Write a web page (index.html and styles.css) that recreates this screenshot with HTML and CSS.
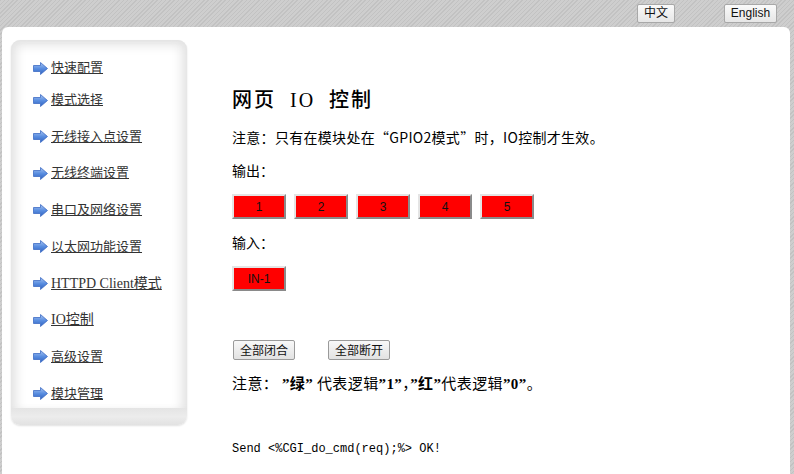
FILE: index.html
```html
<!DOCTYPE html>
<html lang="zh">
<head>
<meta charset="utf-8">
<title>网页 IO 控制</title>
<link rel="stylesheet" href="styles.css">
</head>
<body>
<div class="topbar">
  <button class="lang lang-zh">中文</button>
  <button class="lang lang-en">English</button>
</div>
<div class="page">
  <aside class="sidebar">
    <ul class="menu">
      <li class="first"><span class="arrow"><svg width="15" height="13" viewBox="0 0 15 13"><defs><linearGradient id="ag" x1="0" y1="0" x2="0" y2="1"><stop offset="0" stop-color="#a6c4f2"/><stop offset="0.5" stop-color="#5a8ee0"/><stop offset="1" stop-color="#2f62c0"/></linearGradient></defs><path d="M0.5 3.5 H7.5 V0.5 L14.5 6.5 L7.5 12.5 V9.5 H0.5 Z" fill="url(#ag)" stroke="#3d6cc4" stroke-width="0.8"/></svg></span><a href="#">快速配置</a></li>
      <li class="second"><span class="arrow"><svg width="15" height="13" viewBox="0 0 15 13"><path d="M0.5 3.5 H7.5 V0.5 L14.5 6.5 L7.5 12.5 V9.5 H0.5 Z" fill="url(#ag)" stroke="#3d6cc4" stroke-width="0.8"/></svg></span><a href="#">模式选择</a></li>
      <li><span class="arrow"><svg width="15" height="13" viewBox="0 0 15 13"><path d="M0.5 3.5 H7.5 V0.5 L14.5 6.5 L7.5 12.5 V9.5 H0.5 Z" fill="url(#ag)" stroke="#3d6cc4" stroke-width="0.8"/></svg></span><a href="#">无线接入点设置</a></li>
      <li><span class="arrow"><svg width="15" height="13" viewBox="0 0 15 13"><path d="M0.5 3.5 H7.5 V0.5 L14.5 6.5 L7.5 12.5 V9.5 H0.5 Z" fill="url(#ag)" stroke="#3d6cc4" stroke-width="0.8"/></svg></span><a href="#">无线终端设置</a></li>
      <li><span class="arrow"><svg width="15" height="13" viewBox="0 0 15 13"><path d="M0.5 3.5 H7.5 V0.5 L14.5 6.5 L7.5 12.5 V9.5 H0.5 Z" fill="url(#ag)" stroke="#3d6cc4" stroke-width="0.8"/></svg></span><a href="#">串口及网络设置</a></li>
      <li><span class="arrow"><svg width="15" height="13" viewBox="0 0 15 13"><path d="M0.5 3.5 H7.5 V0.5 L14.5 6.5 L7.5 12.5 V9.5 H0.5 Z" fill="url(#ag)" stroke="#3d6cc4" stroke-width="0.8"/></svg></span><a href="#">以太网功能设置</a></li>
      <li><span class="arrow"><svg width="15" height="13" viewBox="0 0 15 13"><path d="M0.5 3.5 H7.5 V0.5 L14.5 6.5 L7.5 12.5 V9.5 H0.5 Z" fill="url(#ag)" stroke="#3d6cc4" stroke-width="0.8"/></svg></span><a href="#" class="latin">HTTPD Client模式</a></li>
      <li><span class="arrow"><svg width="15" height="13" viewBox="0 0 15 13"><path d="M0.5 3.5 H7.5 V0.5 L14.5 6.5 L7.5 12.5 V9.5 H0.5 Z" fill="url(#ag)" stroke="#3d6cc4" stroke-width="0.8"/></svg></span><a href="#" class="latin">IO控制</a></li>
      <li><span class="arrow"><svg width="15" height="13" viewBox="0 0 15 13"><path d="M0.5 3.5 H7.5 V0.5 L14.5 6.5 L7.5 12.5 V9.5 H0.5 Z" fill="url(#ag)" stroke="#3d6cc4" stroke-width="0.8"/></svg></span><a href="#">高级设置</a></li>
      <li><span class="arrow"><svg width="15" height="13" viewBox="0 0 15 13"><path d="M0.5 3.5 H7.5 V0.5 L14.5 6.5 L7.5 12.5 V9.5 H0.5 Z" fill="url(#ag)" stroke="#3d6cc4" stroke-width="0.8"/></svg></span><a href="#">模块管理</a></li>
    </ul>
    <div class="sidebar-foot"></div>
  </aside>
  <main class="content">
    <h1 class="title">网页&nbsp; IO&nbsp; 控制</h1>
    <p class="note">注意：只有在模块处在“GPIO2模式”时，IO控制才生效。</p>
    <p class="label">输出：</p>
    <div class="io-row">
      <button class="io">1</button>
      <button class="io">2</button>
      <button class="io">3</button>
      <button class="io">4</button>
      <button class="io">5</button>
    </div>
    <p class="label">输入：</p>
    <div class="io-row">
      <button class="io">IN-1</button>
    </div>
    <div class="ctrl-row">
      <button class="ctrl">全部闭合</button>
      <button class="ctrl">全部断开</button>
    </div>
    <p class="note2">注意： <b>”绿”</b> 代表逻辑<b>”1”</b>，<b>”红”</b>代表逻辑<b>”0”</b>。</p>
    <p class="send">Send &lt;%CGI_do_cmd(req);%&gt; OK!</p>
  </main>
</div>
</body>
</html>
```

FILE: styles.css
```css
html, body {
  margin: 0;
  padding: 0;
  height: 100%;
}
body {
  background: repeating-linear-gradient(135deg, #c2c2c2 0 1px, #cecece 1px 3px);
  font-family: "Noto Sans CJK SC", sans-serif;
  color: #000;
  overflow: hidden;
}
.topbar {
  height: 27px;
  display: flex;
  justify-content: flex-end;
  align-items: flex-start;
  padding: 4px 17px 0 0;
  box-sizing: border-box;
  gap: 49px;
}
.lang {
  height: 19px;
  padding: 0;
  border: 1px solid #a8a8a8;
  border-radius: 2px;
  background: linear-gradient(#fafafa, #e6e6e6);
  font-family: "Liberation Sans", "Noto Sans CJK SC", sans-serif;
  font-size: 12px;
  color: #111;
  line-height: 17px;
}
.lang-zh { width: 38px; }
.lang-en { width: 53px; }

.page {
  margin: 0 4px 0 2px;
  height: 447px;
  background: #fff;
  border-radius: 6px 6px 0 0;
  display: flex;
  align-items: flex-start;
}

.sidebar {
  margin: 13px 0 0 9px;
  width: 176px;
  height: 385px;
  border-radius: 9px;
  overflow: hidden;
  display: flex;
  flex-direction: column;
  background: #fff;
  box-shadow: 0 1px 2px rgba(0,0,0,0.12);
}
.menu {
  list-style: none;
  margin: 0;
  padding: 18px 0 0 22px;
  flex: 1;
  display: flex;
  flex-direction: column;
  box-shadow: inset 11px 0 11px -6px #e2e2e2, inset -11px 0 11px -6px #e2e2e2, inset 0 11px 11px -6px #e2e2e2;
}
.menu li {
  display: flex;
  align-items: center;
  height: 20px;
  margin-top: 16.71px;
}
.menu li.first { margin-top: 0; }
.menu li.second { margin-top: 12px; }
.arrow {
  width: 15px;
  height: 13px;
  margin-right: 3px;
  display: flex;
}
.menu a {
  font-family: "Liberation Serif", "Noto Sans CJK SC", serif;
  font-size: 13px;
  color: #333;
  text-decoration: underline;
  line-height: 20px;
}
.menu a.latin {
  font-size: 14px;
}
.sidebar-foot {
  height: 17px;
  background: linear-gradient(#e4e4e4, #ececec 50%, #e2e2e2);
}

.content {
  margin-left: 45px;
  padding-top: 61px;
  display: flex;
  flex-direction: column;
  align-items: flex-start;
}
.title {
  margin: 0;
  font-size: 20px;
  line-height: 24px;
  font-weight: 500;
  font-family: "Liberation Serif", "Noto Sans CJK SC", serif;
  letter-spacing: 2px;
}
.note {
  margin: 15px 0 0;
  font-size: 14px;
  line-height: 20px;
  letter-spacing: 0.3px;
}
.label {
  margin: 13px 0 0;
  font-size: 14px;
  line-height: 20px;
}
.io-row {
  margin-top: 14px;
  display: flex;
  gap: 8px;
}
.io {
  width: 54px;
  height: 25px;
  padding: 0;
  background: #ff0000;
  border: 2px solid;
  border-color: #e4e4e4 #8a8a8a #8a8a8a #e4e4e4;
  font-family: "Liberation Sans", sans-serif;
  font-size: 12px;
  color: #111;
}
.ctrl-row {
  margin-top: 49px;
  display: flex;
  gap: 33px;
  padding-left: 1px;
}
.ctrl {
  width: 62px;
  height: 20px;
  padding: 0;
  border: 1px solid #9a9a9a;
  border-radius: 2px;
  background: linear-gradient(#f8f8f8, #e2e2e2);
  font-family: "Noto Sans CJK SC", sans-serif;
  font-size: 12px;
  line-height: 18px;
  color: #111;
}
.note2 {
  margin: 13px 0 0;
  font-size: 15px;
  line-height: 20px;
  letter-spacing: 0.4px;
}
.note2 b {
  font-family: "Liberation Serif", "Noto Sans CJK SC", serif;
  font-weight: bold;
}
.send {
  margin: 45px 0 0;
  font-family: "Liberation Mono", monospace;
  font-size: 12px;
  line-height: 20px;
}
```
